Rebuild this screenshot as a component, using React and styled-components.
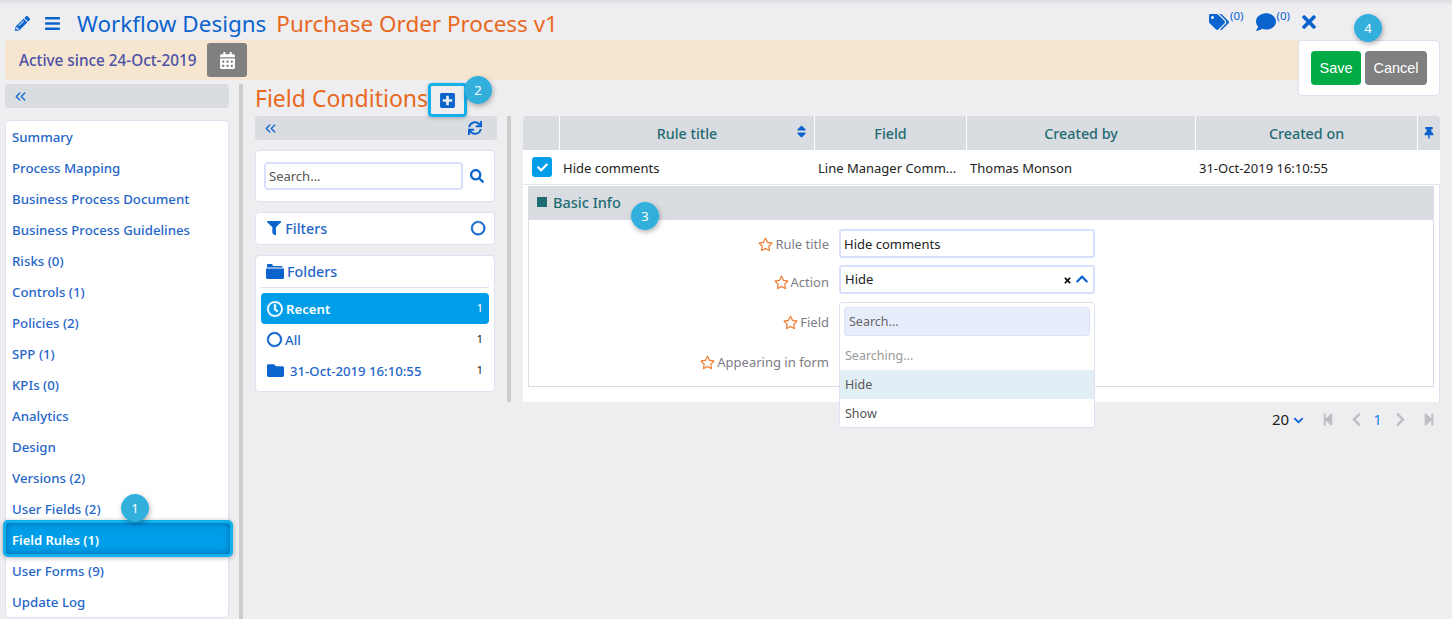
import React from "react";
import styled, { createGlobalStyle } from "styled-components";
import { ChevronsLeft } from "lucide-react";
import {
  FaBars, FaCalendarAlt, FaCheck, FaChevronDown, FaChevronLeft, FaChevronRight, FaChevronUp,
  FaComment, FaFilter, FaFolder, FaPencilAlt, FaPlusSquare, FaRegCircle, FaRegClock, FaRegStar,
  FaSearch, FaSort, FaStepBackward, FaStepForward, FaSync, FaTags, FaThumbtack, FaTimes,
} from "react-icons/fa";

const BLUE = "#0b63ce";
const ORANGE = "#e8681e";
const TEAL = "#1f6b72";
const LINK = "#1f66c9";
const BAR = "#d9dce1";
const EDGE = "#dfe1f0";

const Global = createGlobalStyle`
  html, body { margin: 0; padding: 0; height: 100%; }
  body { background: #eeeef1; font-family: "Noto Sans", "Open Sans", sans-serif; overflow: hidden; }
  * { box-sizing: border-box; }
`;

const Page = styled.div`
  position: relative; width: 1452px; height: 619px; overflow: hidden; padding: 0 12px 0 5px;
  &::before {
    content: ""; position: absolute; left: 0; right: 0; top: 0; height: 5px;
    background: linear-gradient(#dcdde0, #eeeef1);
  }
`;

/* top */
const Header = styled.header`
  height: 40px; display: flex; align-items: center; padding: 7px 0 0 10px; color: ${BLUE};
`;
const HeadIcon = styled.span`
  display: flex; margin-right: ${(p) => p.$gap}px; font-size: ${(p) => p.$size}px;
`;
const Title = styled.h1`
  margin: 0 10px 0 0; font-size: 22.45px; font-weight: 400; line-height: 30px; color: ${(p) => p.$color};
`;
const HeaderActions = styled.div`
  margin-left: auto; display: flex; align-items: center; margin-right: 121px; gap: 9px; font-size: 20px; margin-top: -3px;
`;
const Counted = styled.span`
  display: flex; align-items: center;
  & + & { margin-left: 3px; }
  sup { font-size: 11.5px; line-height: 1; margin: -12px 0 0 1px; }
`;
const Banner = styled.div`
  height: 40px; background: #f6e6cf; border-radius: 4px; display: flex; align-items: center; padding-left: 14px;
  margin-right: 20px;
`;
const Active = styled.span`
  font-size: 15.3px; font-weight: 500; color: #4c4fa6; margin-right: 9px; width: 179px; white-space: nowrap;
`;
const CalButton = styled.button`
  width: 40px; height: 34px; border: 0; border-radius: 3px; background: #808080; color: #fff;
  display: grid; place-items: center; font-size: 17px; padding: 0;
`;
const SaveCard = styled.div`
  position: absolute; left: 1298px; top: 40px; width: 142px; height: 56px; background: #fff;
  border: 1px solid ${EDGE}; border-radius: 4px; display: flex; align-items: center; gap: 4px; padding-left: 12px;
`;
const Btn = styled.button`
  height: 34px; width: ${(p) => p.$w}px; border: 0; border-radius: 4px; color: #fff; background: ${(p) => p.$bg};
  font: 14.5px "Liberation Sans", Arial, sans-serif; padding: 0;
`;

/* columns */
const Main = styled.div`
  display: flex; margin-top: 4px; height: 535px;
`;
const Side = styled.aside`
  width: 224px; flex-shrink: 0;
`;
const Splitter = styled.div`
  width: 4px; background: #cccccc; flex-shrink: 0; margin: ${(p) => p.$m};
`;
const CollapseBar = styled.div`
  height: 24px; background: ${BAR}; border-radius: 4px; display: flex; align-items: center; justify-content: space-between;
  padding: 0 15px 0 7px; color: ${BLUE}; font-size: 14px;
`;
const Menu = styled.nav`
  margin-top: 12px; height: 498px; background: #fff; border: 1px solid ${EDGE}; border-radius: 4px;
  padding-top: 1px;
`;
const MenuItem = styled.div`
  position: relative; height: 31px; line-height: 31px; padding-left: 6px; font-size: 13.25px; font-weight: 500; color: ${LINK};
  ${(p) => p.$on && `
    color: #fff; z-index: 1; font-weight: 600; font-size: 13px;
    &::before {
      content: ""; position: absolute; inset: -5px -5px -1px -3px; background: #009de8; z-index: -1;
      border: 3px solid #12b1ea; border-radius: 5px; box-shadow: 0 1px 5px rgba(0,0,0,.3), inset 0 0 6px rgba(0,60,120,.55);
    }
  `}
`;
const Badge = styled.span`
  position: absolute; left: ${(p) => p.$x - 14}px; top: ${(p) => p.$y - 14}px; width: 28px; height: 28px; border-radius: 50%;
  background: #33afdc; border: 1px solid #25b2e6; color: #fff; font-size: 13px; display: grid; place-items: center;
  box-shadow: 1px 2px 5px rgba(0,0,0,.3); z-index: 5;
`;

const Middle = styled.section`
  width: 242px; flex-shrink: 0; margin-left: 12px;
`;
const PageTitleRow = styled.div`
  height: 32px; display: flex; align-items: flex-start; position: relative;
`;
const PageTitle = styled.h2`
  margin: 0; font-size: 23px; font-weight: 400; color: ${ORANGE}; line-height: 28px;
`;
const AddWrap = styled.span`
  position: absolute; left: 173px; top: -1px; width: 39px; height: 34px; border: 3px solid #12b1ea; border-radius: 4px;
  display: grid; place-items: center; color: ${BLUE}; font-size: 17px; box-shadow: 0 1px 4px rgba(0,0,0,.25);
`;
const Card = styled.div`
  width: 240px; background: #fff; border: 1px solid ${EDGE}; border-radius: 4px; margin-top: 10px;
`;
const SearchCard = styled(Card)`
  height: 52px; display: flex; align-items: center; padding-left: 8px; color: ${BLUE}; font-size: 14px; gap: 7px;
`;
const SearchBox = styled.div`
  width: 199px; height: 28px; border: 2px solid #d9e0fb; border-radius: 4px; font-size: 13px; color: #555;
  line-height: 25px; padding-left: 3px;
`;
const FilterCard = styled(Card)`
  height: 33px; display: flex; align-items: center; justify-content: space-between; padding: 0 9px 0 11px;
  color: ${LINK}; font-size: 14.3px; font-weight: 500;
  span { display: flex; align-items: center; gap: 4px; }
  svg { color: ${BLUE}; }
  > svg { stroke: currentColor; stroke-width: 24; overflow: visible; }
`;
const FolderCard = styled(Card)`
  height: 137px; padding: 0 5px;
`;
const FolderHead = styled.div`
  height: 32px; border-bottom: 1px solid ${EDGE}; display: flex; align-items: center; gap: 3px; padding-left: 5px;
  color: ${LINK}; font-size: 14.3px; font-weight: 500;
  svg { color: ${BLUE}; flex-shrink: 0; }
`;
const FolderRow = styled.div`
  height: 31px; margin-top: ${(p) => p.$first ? 5 : 0}px; display: flex; align-items: center; padding: 0 6px; border-radius: 4px;
  font-size: 13.2px; font-weight: ${(p) => (p.$on ? 600 : 500)}; color: ${(p) => (p.$on ? "#fff" : LINK)}; background: ${(p) => (p.$on ? "#009de8" : "transparent")};
  svg { font-size: ${(p) => p.$icon || 15}px; margin-right: ${(p) => p.$gap || 3}px; color: ${(p) => (p.$on ? "#fff" : BLUE)}; stroke: currentColor; stroke-width: ${(p) => p.$stroke || 0}; overflow: visible; }
  b { margin-left: auto; font-weight: 400; font-size: 11.5px; color: ${(p) => (p.$on ? "#fff" : "#222")}; margin-top: -3px; }
`;

const Right = styled.section`
  width: 917px; flex-shrink: 0; margin-left: 12px; padding-top: 32px;
`;
const TableHead = styled.div`
  height: 34px; background: ${BAR}; border-radius: 4px 4px 0 0; display: grid; grid-template-columns: 37px 255px 152px 229px 222px 22px;
`;
const HeadCell = styled.div`
  position: relative; display: flex; align-items: center; justify-content: center; border-right: 1px solid #fff;
  font-size: 14.3px; font-weight: 500; color: ${TEAL};
  &:last-child { border-right: 0; color: ${BLUE}; }
`;
const SortMark = styled.span`
  position: absolute; right: 5px; top: 8px; color: ${BLUE}; font-size: 15px; display: flex;
`;
const TableRow = styled.div`
  height: 35px; background: #fff; display: grid; grid-template-columns: 37px 255px 152px 229px 222px 22px; align-items: center;
  font-size: 13px; color: #222; border-bottom: 1px solid #e3e4ea;
`;
const Cell = styled.div`
  padding: 1px 0 0 3px; white-space: nowrap; overflow: hidden;
`;
const Tick = styled.span`
  width: 20px; height: 20px; margin-left: 9px; background: #009de8; border-radius: 3px; color: #fff; display: grid; place-items: center; font-size: 11px;
`;
const Detail = styled.div`
  background: #fff; height: 217px; padding: 1px 5px 0; border-right: 1px solid ${EDGE};
`;
const Box = styled.div`
  height: 201px; border: 1px solid #dcdde6; border-top: 0;
`;
const BoxHead = styled.div`
  height: 34px; background: ${BAR}; display: flex; align-items: center; gap: 6px; padding: 0 0 2px 8px;
  font-size: 14.5px; font-weight: 500; color: ${TEAL};
  i { width: 10px; height: 10px; background: ${TEAL}; }
`;
const FormBody = styled.div`
  position: relative; padding-top: 9px;
`;
const FormRow = styled.div`
  display: flex; align-items: center; height: ${(p) => p.$h}px; margin-top: ${(p) => p.$top || 0}px;
`;
const FieldLabel = styled.label`
  width: 300px; display: flex; align-items: center; justify-content: flex-end; gap: 2px; font-size: 13px; color: #7d7d86;
  svg { color: #f0813a; font-size: 15px; }
`;
const Input = styled.div`
  margin-left: 10px; width: 256px; height: 29px; border: 2px solid #d9e0fb; border-radius: 3px; align-self: flex-start;
  display: flex; align-items: center; padding: ${(p) => (p.$select ? "0 4px 1px" : "1px 3px 0")}; font-size: 13px; color: #222;
`;
const Clear = styled.span`
  margin-left: auto; display: flex; color: #111; font-size: 9px; margin-right: 3px; margin-top: 3px;
`;
const DropDown = styled.div`
  position: absolute; left: 310px; top: 82px; width: 256px; height: 126px; background: #fff; border: 1px solid ${EDGE};
  border-radius: 3px; padding-top: 4px; font-size: 12.5px; color: #555; z-index: 2;
`;
const DropSearch = styled.div`
  height: 29px; margin: 0 4px; background: #e8edfb; border: 1px solid #dde3f6; border-radius: 3px; padding-left: 4px; line-height: 27px; color: #666;
`;
const DropItem = styled.div`
  height: 29px; line-height: 29px; padding-left: 5px; color: ${(p) => p.$muted ? "#999" : "#555"}; background: ${(p) => p.$on ? "#e2eef6" : "transparent"};
  margin-top: ${(p) => p.$top || 0}px;
`;
const Pager = styled.div`
  height: 34px; display: flex; align-items: center; color: #bcbec2; font-size: 15px; padding-left: 749px;
`;
const PageSize = styled.span`
  display: flex; align-items: center; gap: 4px; color: #222; font-size: 15px; margin-right: 18px;
  svg { color: ${BLUE}; font-size: 11px; margin-top: 2px; }
`;
const PageBtn = styled.span`
  display: flex; justify-content: center; width: ${(p) => p.$w}px; margin-right: ${(p) => p.$gap}px;
`;
const PageNo = styled.span`
  color: #1e88e5; font-size: 15px; width: 8px; margin-right: 14px;
`;

// fa-folder-open as the reference draws it: tab, gap, solid front
const FolderOpenIcon = () => (
  <svg width="18" height="15" viewBox="0 0 18 15" fill="currentColor">
    <path d="M1 3V1.2C1 .5 1.5 0 2.2 0h3.2c.6 0 1 .3 1.2.8L7 2h8.4c.7 0 1.2.5 1.2 1.2V3.6H1z" />
    <path d="M0 4.6h18V13.6c0 .8-.6 1.4-1.4 1.4H1.4C.6 15 0 14.4 0 13.6z" />
  </svg>
);

const menu = ["Summary", "Process Mapping", "Business Process Document", "Business Process Guidelines", "Risks (0)", "Controls (1)", "Policies (2)", "SPP (1)", "KPIs (0)", "Analytics", "Design", "Versions (2)", "User Fields (2)", "Field Rules (1)", "User Forms (9)", "Update Log"];

export default function App() {
  return (
    <Page>
      <Global />
      <Header>
        <HeadIcon $gap={14} $size={15}><FaPencilAlt /></HeadIcon>
        <HeadIcon $gap={16} $size={17}><FaBars /></HeadIcon>
        <Title $color={BLUE}>Workflow Designs</Title>
        <Title $color={ORANGE}>Purchase Order Process v1</Title>
        <HeaderActions>
          <Counted><FaTags /><sup>(0)</sup></Counted>
          <Counted><FaComment /><sup>(0)</sup></Counted>
          <FaTimes />
        </HeaderActions>
      </Header>
      <Banner>
        <Active>Active since 24-Oct-2019</Active>
        <CalButton><FaCalendarAlt /></CalButton>
      </Banner>
      <SaveCard>
        <Btn $w={50} $bg="#00ab44">Save</Btn>
        <Btn $w={62} $bg="#808080">Cancel</Btn>
      </SaveCard>

      <Main>
        <Side>
          <CollapseBar><ChevronsLeft size={17} strokeWidth={1.7} /></CollapseBar>
          <Menu>
            {menu.map((m) => <MenuItem key={m} $on={m === "Field Rules (1)"}>{m}</MenuItem>)}
          </Menu>
        </Side>
        <Splitter $m="0 0 0 10px" />
        <Middle>
          <PageTitleRow>
            <PageTitle>Field Conditions</PageTitle>
            <AddWrap><FaPlusSquare /></AddWrap>
          </PageTitleRow>
          <CollapseBar><ChevronsLeft size={17} strokeWidth={1.7} /><FaSync /></CollapseBar>
          <SearchCard>
            <SearchBox>Search...</SearchBox>
            <FaSearch />
          </SearchCard>
          <FilterCard>
            <span><FaFilter />Filters</span>
            <FaRegCircle />
          </FilterCard>
          <FolderCard>
            <FolderHead><FolderOpenIcon />Folders</FolderHead>
            <FolderRow $first $on $icon={16} $stroke={14}><FaRegClock />Recent<b>1</b></FolderRow>
            <FolderRow $stroke={24}><FaRegCircle />All<b>1</b></FolderRow>
            <FolderRow $icon={17} $gap={6}><FaFolder />31-Oct-2019 16:10:55<b>1</b></FolderRow>
          </FolderCard>
        </Middle>
        <Splitter $m="32px 0 217px 10px" />
        <Right>
          <TableHead>
            <HeadCell />
            <HeadCell>Rule title<SortMark><FaSort /></SortMark></HeadCell>
            <HeadCell>Field</HeadCell>
            <HeadCell>Created by</HeadCell>
            <HeadCell>Created on</HeadCell>
            <HeadCell><FaThumbtack size={12} /></HeadCell>
          </TableHead>
          <TableRow>
            <Tick><FaCheck /></Tick>
            <Cell>Hide comments</Cell>
            <Cell>Line Manager Comm...</Cell>
            <Cell>Thomas Monson</Cell>
            <Cell>31-Oct-2019 16:10:55</Cell>
          </TableRow>
          <Detail>
            <Box>
              <BoxHead><i />Basic Info</BoxHead>
              <FormBody>
                <FormRow $h={30}>
                  <FieldLabel><FaRegStar />Rule title</FieldLabel>
                  <Input>Hide comments</Input>
                </FormRow>
                <FormRow $h={34} $top={6}>
                  <FieldLabel><FaRegStar />Action</FieldLabel>
                  <Input $select>
                    Hide
                    <Clear><FaTimes /></Clear>
                    <FaChevronUp color={BLUE} size={14} />
                  </Input>
                </FormRow>
                <FormRow $h={40} $top={3}>
                  <FieldLabel><FaRegStar />Field</FieldLabel>
                </FormRow>
                <FormRow $h={40}>
                  <FieldLabel><FaRegStar />Appearing in form</FieldLabel>
                </FormRow>
                <DropDown>
                  <DropSearch>Search...</DropSearch>
                  <DropItem $muted $top={5}>Searching...</DropItem>
                  <DropItem $on>Hide</DropItem>
                  <DropItem>Show</DropItem>
                </DropDown>
              </FormBody>
            </Box>
          </Detail>
          <Pager>
            <PageSize>20<FaChevronDown /></PageSize>
            <PageBtn $w={12} $gap={17}><FaStepBackward /></PageBtn>
            <PageBtn $w={11} $gap={11}><FaChevronLeft /></PageBtn>
            <PageNo>1</PageNo>
            <PageBtn $w={11} $gap={17}><FaChevronRight /></PageBtn>
            <PageBtn $w={12} $gap={0}><FaStepForward /></PageBtn>
          </Pager>
        </Right>
      </Main>

      <Badge $x={135} $y={508}>1</Badge>
      <Badge $x={478} $y={90}>2</Badge>
      <Badge $x={645} $y={216}>3</Badge>
      <Badge $x={1368} $y={28}>4</Badge>
    </Page>
  );
}
